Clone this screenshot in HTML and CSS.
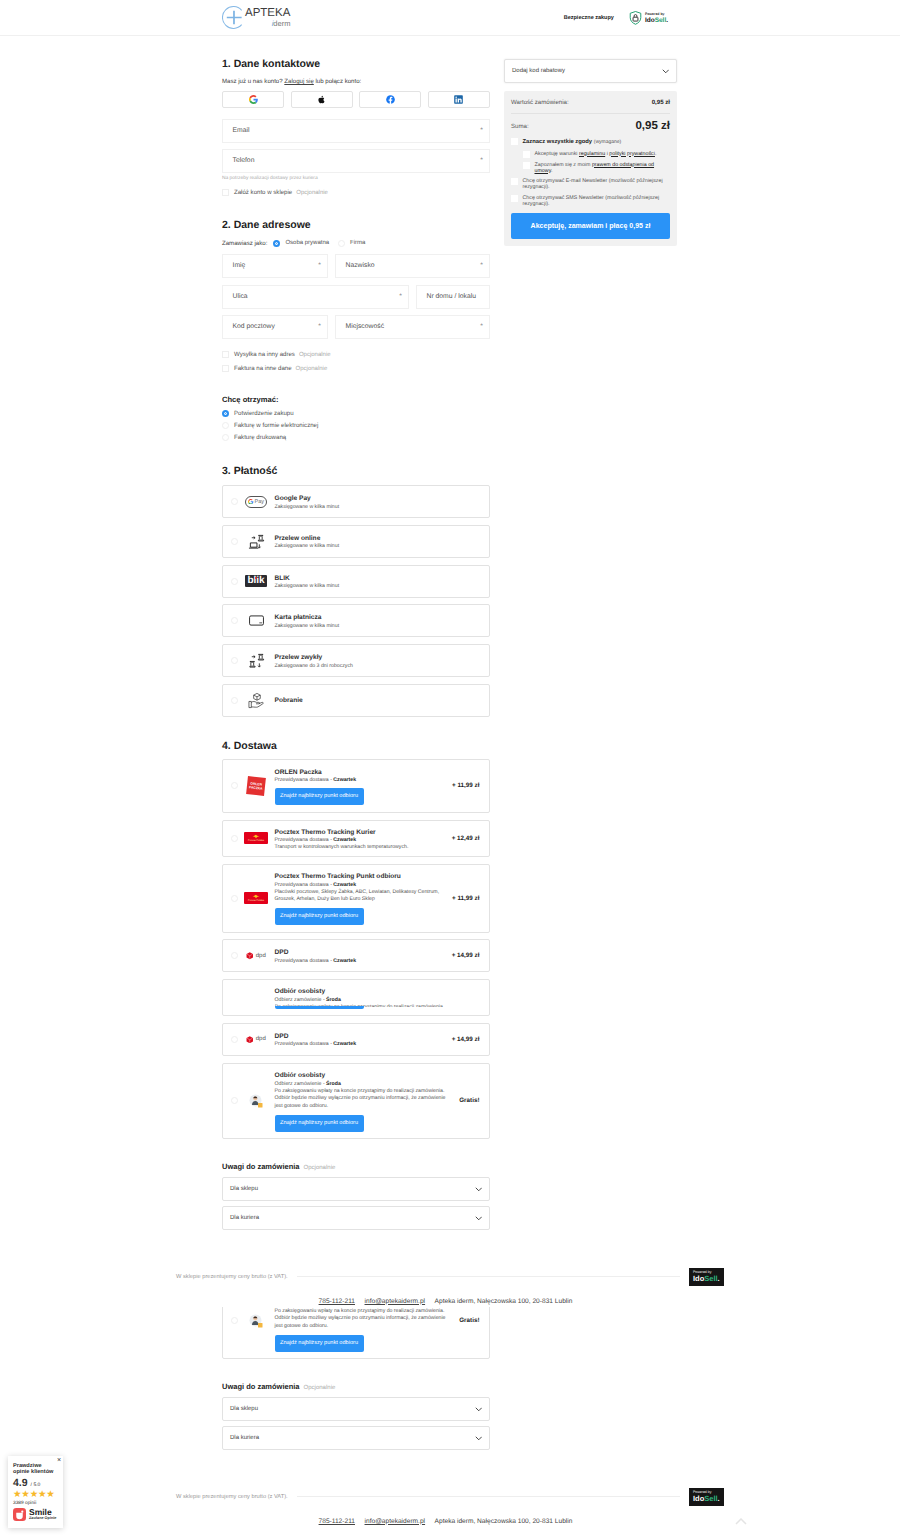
FILE: index.html
```html
<!DOCTYPE html>
<html lang="pl">
<head>
    <meta charset="UTF-8">
    <meta name="viewport" content="width=device-width, initial-scale=1.0">
    <title>Apteka iderm - zamówienie</title>
    <link rel="stylesheet" href="styles.css">
</head>
<body>
    <header class="top">
        <div class="top-in">
            <div class="logo">
                <svg class="logo-mark" viewBox="0 0 24 24"><path d="M20.500 4.500A11.400 11.400 0 1 0 20.500 19.500" fill="none" stroke="#86b9e6" stroke-width="1.100"/><path d="M12.500 5v14M5 12h15.500" stroke="#7db3e3" stroke-width="1.800" fill="none"/></svg>
                <div class="logo-text">
                    <span class="logo-name">APTEKA</span>
                    <span class="logo-sub"><i>i</i>derm</span>
                </div>
            </div>
            <div class="top-right">
                <span class="safe">Bezpieczne zakupy</span>
                <svg class="shield" viewBox="0 0 16 18"><path d="M8 1l6.500 2.200v5.300c0 4-2.800 6.700-6.500 8.200-3.700-1.500-6.500-4.200-6.500-8.200V3.200z" fill="none" stroke="#1f9d6f" stroke-width="1.200"/><rect x="5" y="8" width="6" height="4.800" rx=".8" fill="none" stroke="#222" stroke-width="1.100"/><path d="M6.300 8V6.500a1.700 1.700 0 0 1 3.400 0V8" fill="none" stroke="#222" stroke-width="1"/></svg>
                <div class="ido-top">
                    <span class="ido-small">Powered by</span>
                    <span class="ido-big">Ido<b>Sell</b>.</span>
                </div>
            </div>
        </div>
    </header>

    <div class="wrap">
        <main class="left">
            <h2 class="sec">1. Dane kontaktowe</h2>
            <p class="login-line">Masz już u nas konto? <a href="#">Zaloguj się</a> lub połącz konto:</p>
            <div class="socials">
                <button class="soc">
                    <svg viewBox="0 0 48 48"><path fill="#EA4335" d="M24 9.500c3.500 0 6.700 1.200 9.200 3.600l6.900-6.900C35.900 2.400 30.500 0 24 0 14.600 0 6.500 5.400 2.600 13.200l8 6.200C12.500 13.700 17.800 9.500 24 9.500z"/><path fill="#4285F4" d="M47 24.500c0-1.600-.1-3.100-.4-4.500H24v9h12.900c-.6 3-2.200 5.500-4.700 7.200l7.700 6C44.400 38 47 31.800 47 24.500z"/><path fill="#FBBC05" d="M10.500 28.600A14.500 14.500 0 0 1 10.500 19.400l-8-6.200a24 24 0 0 0 0 21.600z"/><path fill="#34A853" d="M24 48c6.500 0 11.900-2.100 15.900-5.800l-7.700-6c-2.200 1.500-4.900 2.300-8.200 2.300-6.200 0-11.500-4.200-13.400-9.900l-8 6.200C6.500 42.600 14.600 48 24 48z"/></svg>
                </button>
                <button class="soc">
                    <svg viewBox="0 0 24 24"><path fill="#111" d="M17.300 12.700c0-2.500 2-3.700 2.100-3.800-1.200-1.700-3-1.900-3.600-1.900-1.500-.2-3 .9-3.800.9-.8 0-2-.9-3.300-.9-1.700 0-3.300 1-4.100 2.500-1.800 3.100-.5 7.600 1.200 10.100.9 1.200 1.900 2.600 3.200 2.500 1.300 0 1.800-.8 3.300-.8s2 .8 3.300.8c1.400 0 2.300-1.200 3.100-2.400 1-1.400 1.400-2.800 1.400-2.800-.1 0-2.800-1.100-2.800-4.200zM14.800 5.300c.7-.8 1.200-2 1-3.200-1 0-2.300.7-3 1.500-.6.800-1.200 2-1 3.100 1.100.1 2.300-.6 3-1.400z"/></svg>
                </button>
                <button class="soc">
                    <svg viewBox="0 0 24 24"><circle cx="12" cy="12" r="11.500" fill="#1877f2"/><path fill="#fff" d="M16.500 15.400l.5-3.400h-3.300V9.800c0-.9.500-1.800 1.900-1.800H17V5.100s-1.300-.2-2.600-.2c-2.700 0-4.400 1.600-4.400 4.600V12H7v3.400h3v8.400a11.600 11.600 0 0 0 3.700 0v-8.400z"/></svg>
                </button>
                <button class="soc">
                    <svg viewBox="0 0 24 24"><rect x=".5" y=".5" width="23" height="23" rx="2" fill="#1d67a8"/><path fill="#fff" d="M4 9.300h3.500V20H4zM5.700 4a2 2 0 1 1 0 4 2 2 0 0 1 0-4zM9.700 9.300H13v1.500c.5-.9 1.700-1.800 3.400-1.800 3.600 0 4.200 2.300 4.200 5.400V20h-3.500v-4.900c0-1.200 0-2.700-1.700-2.700s-1.900 1.300-1.900 2.600v5H9.700z"/></svg>
                </button>
            </div>

            <div class="field email"><span>Email</span><em>*</em></div>
            <div class="field phone"><span>Telefon</span><em>*</em></div>
            <p class="note">Na potrzeby realizacji dostawy przez kuriera</p>
            <label class="opt first-opt"><i class="box"></i>Załóż konto w sklepie <small>Opcjonalnie</small></label>

            <h2 class="sec sec-gap">2. Dane adresowe</h2>
            <div class="buyer">
                <span>Zamawiasz jako:</span>
                <label class="buyer-o"><i class="dot on"></i>Osoba prywatna</label>
                <label class="buyer-o"><i class="dot"></i>Firma</label>
            </div>
            <div class="addr">
                <div class="row-a"><div class="field"><span>Imię</span><em>*</em></div><div class="field"><span>Nazwisko</span><em>*</em></div></div>
                <div class="row-b"><div class="field"><span>Ulica</span><em>*</em></div><div class="field"><span>Nr domu / lokalu</span></div></div>
                <div class="row-a"><div class="field"><span>Kod pocztowy</span><em>*</em></div><div class="field"><span>Miejscowość</span><em>*</em></div></div>
            </div>
            <label class="opt ship-opt"><i class="box"></i>Wysyłka na inny adres <small>Opcjonalnie</small></label>
            <label class="opt inv-opt"><i class="box"></i>Faktura na inne dane <small>Opcjonalnie</small></label>

            <h3 class="want">Chcę otrzymać:</h3>
            <div class="want-list">
                <label class="opt"><i class="dot on"></i>Potwierdzenie zakupu</label>
                <label class="opt"><i class="dot"></i>Fakturę w formie elektronicznej</label>
                <label class="opt"><i class="dot"></i>Fakturę drukowaną</label>
            </div>

            <h2 class="sec sec-pay">3. Płatność</h2>
            <div class="cards">
                <div class="card pay">
                    <i class="dot"></i>
                    <div class="ico"><div class="gpay"><svg viewBox="0 0 48 48"><path fill="#EA4335" d="M24 9.500c3.500 0 6.700 1.200 9.200 3.600l6.900-6.900C35.900 2.400 30.500 0 24 0 14.600 0 6.500 5.400 2.600 13.200l8 6.200C12.500 13.700 17.800 9.500 24 9.500z"/><path fill="#4285F4" d="M47 24.500c0-1.600-.1-3.100-.4-4.500H24v9h12.900c-.6 3-2.200 5.500-4.700 7.200l7.700 6C44.400 38 47 31.800 47 24.500z"/><path fill="#FBBC05" d="M10.500 28.600A14.500 14.500 0 0 1 10.500 19.400l-8-6.200a24 24 0 0 0 0 21.600z"/><path fill="#34A853" d="M24 48c6.500 0 11.900-2.100 15.900-5.800l-7.700-6c-2.200 1.500-4.900 2.300-8.200 2.300-6.200 0-11.500-4.200-13.400-9.900l-8 6.200C6.500 42.600 14.600 48 24 48z"/></svg>Pay</div></div>
                    <div class="txt"><b>Google Pay</b><span>Zaksięgowane w kilka minut</span></div>
                </div>
                <div class="card pay">
                    <i class="dot"></i>
                    <div class="ico"><svg class="line-ico" viewBox="0 0 18 18"><path d="M11 2.500h5M11.500 2.500v.8h4v-.8M12 4v3M15 4v3M11 7.500h5.500v1h-5.500z" fill="none" stroke="#222" stroke-width=".9"/><path d="M2.500 10.500h7v4.500h-7zM1 16h10" fill="none" stroke="#222" stroke-width="1"/><path d="M4 5h3.500M6 3.800L7.500 5 6 6.200M12 12v3.500M10.600 14.500L12 16l1.200-1.500" fill="none" stroke="#222" stroke-width=".9"/></svg></div>
                    <div class="txt"><b>Przelew online</b><span>Zaksięgowane w kilka minut</span></div>
                </div>
                <div class="card pay">
                    <i class="dot"></i>
                    <div class="ico"><div class="blik">blik</div></div>
                    <div class="txt"><b>BLIK</b><span>Zaksięgowane w kilka minut</span></div>
                </div>
                <div class="card pay">
                    <i class="dot"></i>
                    <div class="ico"><svg class="card-ico" viewBox="0 0 16 11"><rect x=".6" y=".6" width="14.800" height="9.800" rx="1.500" fill="none" stroke="#222" stroke-width="1"/><path d="M11 8h3" stroke="#222" stroke-width=".8"/></svg></div>
                    <div class="txt"><b>Karta płatnicza</b><span>Zaksięgowane w kilka minut</span></div>
                </div>
                <div class="card pay">
                    <i class="dot"></i>
                    <div class="ico"><svg class="line-ico" viewBox="0 0 18 18"><path d="M11 2.500h5M11.500 2.500v.8h4v-.8M12 4v3M15 4v3M11 7.500h5.500v1h-5.500z" fill="none" stroke="#222" stroke-width=".9"/><path d="M2 10h5M2.500 10v.8h4V10M3 11.500v3M6 11.500v3M2 15h5.500v1H2z" fill="none" stroke="#222" stroke-width=".9"/><path d="M4 5h3.500M6 3.800L7.500 5 6 6.200M12 12v3.500M10.600 14.500L12 16l1.200-1.500" fill="none" stroke="#222" stroke-width=".9"/></svg></div>
                    <div class="txt"><b>Przelew zwykły</b><span>Zaksięgowane do 3 dni roboczych</span></div>
                </div>
                <div class="card pay">
                    <i class="dot"></i>
                    <div class="ico"><svg class="line-ico" viewBox="0 0 18 18"><path d="M9.500 1.500l3.500 1.800v3.600l-3.500 1.800L6 6.900V3.300zM6 3.300l3.500 1.800L13 3.300M9.500 5.100v3.600" fill="none" stroke="#222" stroke-width=".7"/><path d="M1 10h2.500v6.500H1zM3.500 11c2-1.500 3.500-1 5.500 0h2.500c1 0 1 1.500 0 1.500H8.500M11.500 12.300l3.500-1.300c1.200-.3 1.500 1 .7 1.500l-5.200 3.300c-1.500.7-4 0-7 0" fill="none" stroke="#222" stroke-width=".7"/></svg></div>
                    <div class="txt"><b>Pobranie</b></div>
                </div>
            </div>

            <h2 class="sec sec-ship">4. Dostawa</h2>
            <div class="cards">
                <div class="card ship h-orlen">
                    <i class="dot"></i>
                    <div class="ico"><div class="orlen"><span>ORLEN<br>PACZKA</span></div></div>
                    <div class="txt"><b>ORLEN Paczka</b><span>Przewidywana dostawa - <strong>Czwartek</strong></span><a class="find" href="#">Znajdź najbliższy punkt odbioru</a></div>
                    <div class="price">+ 11,99 zł</div>
                </div>
                <div class="card ship h-kurier">
                    <i class="dot"></i>
                    <div class="ico"><div class="poczta"><svg viewBox="0 0 12 6"><path d="M1 2.500c2 0 3-1 5-2 1 1 2 2 5 2-2 .5-3 1-4 1.500 0 .7-.5 1.300-1 1.500-.5-.2-1-.8-1-1.500-1-.5-2-1-4-1.500z" fill="#f7c21a"/></svg><span>Poczta Polska</span></div></div>
                    <div class="txt"><b>Pocztex Thermo Tracking Kurier</b><span>Przewidywana dostawa - <strong>Czwartek</strong></span><span>Transport w kontrolowanych warunkach temperaturowych.</span></div>
                    <div class="price">+ 12,49 zł</div>
                </div>
                <div class="card ship h-punkt">
                    <i class="dot"></i>
                    <div class="ico"><div class="poczta"><svg viewBox="0 0 12 6"><path d="M1 2.500c2 0 3-1 5-2 1 1 2 2 5 2-2 .5-3 1-4 1.500 0 .7-.5 1.300-1 1.500-.5-.2-1-.8-1-1.500-1-.5-2-1-4-1.500z" fill="#f7c21a"/></svg><span>Poczta Polska</span></div></div>
                    <div class="txt"><b>Pocztex Thermo Tracking Punkt odbioru</b><span>Przewidywana dostawa - <strong>Czwartek</strong></span><span class="long">Placówki pocztowe, Sklepy Żabka, ABC, Lewiatan, Delikatesy Centrum, Groszek, Arhelan, Duży Ben lub Euro Sklep</span><a class="find" href="#">Znajdź najbliższy punkt odbioru</a></div>
                    <div class="price">+ 11,99 zł</div>
                </div>
                <div class="card ship h-dpd">
                    <i class="dot"></i>
                    <div class="ico"><div class="dpd"><svg viewBox="0 0 10 10"><path d="M5 .3l4.300 2.300v4.800L5 9.700.7 7.400V2.600z" fill="#dc0c1e"/><path d="M1.500 3L5 5l3.500-2M5 5v4" stroke="#fff" stroke-width=".5" fill="none"/></svg>dpd</div></div>
                    <div class="txt"><b>DPD</b><span>Przewidywana dostawa - <strong>Czwartek</strong></span></div>
                    <div class="price">+ 14,99 zł</div>
                </div>
                <div class="card ship h-kurier broken">
                    <div class="ico"></div>
                    <div class="txt"><b>Odbiór osobisty</b><span>Odbierz zamówienie - <strong>Środa</strong></span><span class="cut-line">Po zaksięgowaniu wpłaty na koncie przystąpimy do realizacji zamówienia.</span><span class="cut-btn"></span></div>
                </div>
                <div class="card ship h-dpd">
                    <i class="dot"></i>
                    <div class="ico"><div class="dpd"><svg viewBox="0 0 10 10"><path d="M5 .3l4.300 2.300v4.800L5 9.700.7 7.400V2.600z" fill="#dc0c1e"/><path d="M1.500 3L5 5l3.500-2M5 5v4" stroke="#fff" stroke-width=".5" fill="none"/></svg>dpd</div></div>
                    <div class="txt"><b>DPD</b><span>Przewidywana dostawa - <strong>Czwartek</strong></span></div>
                    <div class="price">+ 14,99 zł</div>
                </div>
                <div class="card ship h-self">
                    <i class="dot"></i>
                    <div class="ico"><svg class="person" viewBox="0 0 14 14"><circle cx="6.500" cy="6.500" r="6" fill="#e9edf1"/><circle cx="6.300" cy="4.500" r="2" fill="#f1c6a5"/><path d="M4.300 4.200c0-2 3.800-2.200 4 0z" fill="#3a2a22"/><path d="M3 11c0-2.800 1.500-4 3.300-4s3.200 1.200 3.200 4z" fill="#4a5560"/><rect x="9" y="9" width="4.500" height="4.500" rx=".6" fill="#f4b740"/></svg></div>
                    <div class="txt"><b>Odbiór osobisty</b><span>Odbierz zamówienie - <strong>Środa</strong></span><span class="long">Po zaksięgowaniu wpłaty na koncie przystąpimy do realizacji zamówienia. Odbiór będzie możliwy wyłącznie po otrzymaniu informacji, że zamówienie jest gotowe do odbioru.</span><a class="find" href="#">Znajdź najbliższy punkt odbioru</a></div>
                    <div class="price">Gratis!</div>
                </div>
            </div>

            <h3 class="notes-h">Uwagi do zamówienia <small>Opcjonalnie</small></h3>
            <div class="drop">Dla sklepu<svg viewBox="0 0 10 6"><path d="M1 1l4 4 4-4" fill="none" stroke="#222" stroke-width="1.100"/></svg></div>
            <div class="drop drop-2">Dla kuriera<svg viewBox="0 0 10 6"><path d="M1 1l4 4 4-4" fill="none" stroke="#222" stroke-width="1.100"/></svg></div>
        </main>

        <aside class="right">
            <div class="drop coupon">Dodaj kod rabatowy<svg viewBox="0 0 10 6"><path d="M1 1l4 4 4-4" fill="none" stroke="#222" stroke-width="1.100"/></svg></div>
            <div class="summary">
                <div class="sum-row first"><span>Wartość zamówienia:</span><b>0,95 zł</b></div>
                <div class="sum-row total"><span>Suma:</span><b>0,95 zł</b></div>
                <label class="agree all"><i class="box"></i><span><b>Zaznacz wszystkie zgody</b> <small>(wymagane)</small></span></label>
                <label class="agree sub"><i class="box"></i><span>Akceptuję warunki <a href="#">regulaminu</a> i <a href="#">polityki prywatności</a>.</span></label>
                <label class="agree sub"><i class="box"></i><span>Zapoznałem się z moim <a href="#">prawem do odstąpienia od umowy</a>.</span></label>
                <label class="agree"><i class="box"></i><span>Chcę otrzymywać E-mail Newsletter (możliwość późniejszej rezygnacji).</span></label>
                <label class="agree"><i class="box"></i><span>Chcę otrzymywać SMS Newsletter (możliwość późniejszej rezygnacji).</span></label>
                <button class="pay-btn">Akceptuję, zamawiam i płacę 0,95 zł</button>
            </div>
        </aside>
    </div>

    <footer class="foot">
        <div class="foot-top">
            <span>W sklepie prezentujemy ceny brutto (z VAT).</span>
            <i class="foot-line"></i>
            <div class="ido-box"><span>Powered by</span><strong>Ido<b>Sell</b>.</strong></div>
        </div>
        <div class="contact"><a href="#">785-112-211</a><a href="#">info@aptekaiderm.pl</a><span>Apteka iderm, Nałęczowska 100, 20-831 Lublin</span></div>
    </footer>

    <!-- dolna czesc strony, od polowy ostatniej karty -->
    <div class="repeat">
        <div class="clip">
            <div class="card ship h-self clip-card">
                <i class="dot"></i>
                <div class="ico"><svg class="person" viewBox="0 0 14 14"><circle cx="6.500" cy="6.500" r="6" fill="#e9edf1"/><circle cx="6.300" cy="4.500" r="2" fill="#f1c6a5"/><path d="M4.300 4.200c0-2 3.800-2.200 4 0z" fill="#3a2a22"/><path d="M3 11c0-2.800 1.500-4 3.300-4s3.200 1.200 3.200 4z" fill="#4a5560"/><rect x="9" y="9" width="4.500" height="4.500" rx=".6" fill="#f4b740"/></svg></div>
                <div class="txt"><b>Odbiór osobisty</b><span>Odbierz zamówienie - <strong>Środa</strong></span><span class="long">Po zaksięgowaniu wpłaty na koncie przystąpimy do realizacji zamówienia. Odbiór będzie możliwy wyłącznie po otrzymaniu informacji, że zamówienie jest gotowe do odbioru.</span><a class="find" href="#">Znajdź najbliższy punkt odbioru</a></div>
                <div class="price">Gratis!</div>
            </div>
        </div>
        <h3 class="notes-h">Uwagi do zamówienia <small>Opcjonalnie</small></h3>
        <div class="drop">Dla sklepu<svg viewBox="0 0 10 6"><path d="M1 1l4 4 4-4" fill="none" stroke="#222" stroke-width="1.100"/></svg></div>
        <div class="drop drop-2">Dla kuriera<svg viewBox="0 0 10 6"><path d="M1 1l4 4 4-4" fill="none" stroke="#222" stroke-width="1.100"/></svg></div>
    </div>

    <footer class="foot foot-last">
        <div class="foot-top">
            <span>W sklepie prezentujemy ceny brutto (z VAT).</span>
            <i class="foot-line"></i>
            <div class="ido-box"><span>Powered by</span><strong>Ido<b>Sell</b>.</strong></div>
        </div>
        <div class="contact"><a href="#">785-112-211</a><a href="#">info@aptekaiderm.pl</a><span>Apteka iderm, Nałęczowska 100, 20-831 Lublin</span></div>
    </footer>

    <div class="smile">
        <span class="smile-x">×</span>
        <b class="smile-h">Prawdziwe opinie klientów</b>
        <div class="smile-score"><b>4.9</b><span>/ 5.0</span></div>
        <div class="smile-stars">★★★★★</div>
        <div class="smile-count">3389 opinii</div>
        <div class="smile-brand">
            <svg viewBox="0 0 14 14"><rect width="14" height="14" rx="3.500" fill="#ef4f4f"/><path d="M3.500 5h7v3.500a3.500 3.500 0 0 1-7 0z" fill="#fff"/><circle cx="10" cy="4" r="1.200" fill="#fff"/></svg>
            <div><b>Smile</b><span>Zaufane Opinie</span></div>
        </div>
    </div>
    <svg class="to-top" viewBox="0 0 12 7"><path d="M1 6l5-5 5 5" fill="none" stroke="#e4e4e4" stroke-width="1.500"/></svg>
</body>
</html>
```
FILE: styles.css
```css
* {
    box-sizing: border-box;
}

body {
    position: relative;
    margin: 0;
    font-family: "Liberation Sans", Arial, sans-serif;
    font-size: 6.5px;
    color: #333;
    background-color: #fff;
    text-rendering: geometricPrecision;
}

a {
    color: inherit;
}

/* naglowek */
.top {
    height: 36px;
    border-bottom: 1px solid #f0f0f0;
}

.top-in {
    width: 455px;
    height: 35px;
    margin-left: 222px;
    display: flex;
    align-items: center;
    justify-content: space-between;
}

.logo {
    display: flex;
    align-items: center;
}

.logo-mark {
    width: 23px;
    height: 23px;
}

.logo-text {
    display: flex;
    flex-direction: column;
    align-items: flex-end;
}

.logo-name {
    font-size: 11.5px;
    line-height: 12px;
    color: #3d3d3d;
}

.logo-sub {
    margin-top: 1px;
    font-size: 7.500px;
    line-height: 8px;
    color: #777;
}

.logo-sub i {
    color: #5aa0de;
}

.top-right {
    display: flex;
    align-items: center;
    padding-right: 9px;
}

.safe {
    font-size: 5.500px;
    font-weight: bold;
    color: #222;
    margin-right: 15px;
}

.shield {
    width: 13px;
    height: 16px;
    margin-right: 3px;
}

.ido-top {
    display: flex;
    flex-direction: column;
}

.ido-small {
    font-size: 3.500px;
    line-height: 5px;
    font-weight: bold;
}

.ido-big {
    font-size: 6.500px;
    line-height: 7px;
    font-weight: bold;
    color: #111;
}

.ido-big b {
    color: #1f9d6f;
}

/* kolumny */
.wrap {
    width: 455px;
    margin-left: 222px;
    padding-top: 20px;
    display: flex;
    gap: 14px;
    align-items: flex-start;
}

.left {
    width: 268px;
    flex: none;
}

.right {
    width: 173px;
    flex: none;
    padding-top: 3px;
}

.sec {
    margin: 0;
    height: 14px;
    padding-top: 2px;
    font-size: 10.500px;
    line-height: 12px;
    color: #222;
}

.sec-gap {
    margin-top: 20px;
}

.sec-pay {
    margin-top: 21px;
}

.sec-ship {
    margin-top: 21px;
}

.login-line {
    margin: 6px 0 0;
    height: 10px;
    padding-top: 2px;
    line-height: 8px;
    font-size: 6.100px;
    color: #444;
}

.socials {
    display: flex;
    justify-content: space-between;
    margin-top: 5px;
}

.soc {
    width: 62px;
    height: 17px;
    padding: 0;
    display: flex;
    align-items: center;
    justify-content: center;
    background-color: #fff;
    border: 1px solid #e3e3e3;
    border-radius: 2px;
}

.soc svg {
    width: 9px;
    height: 9px;
}

.field {
    height: 24px;
    padding: 0 6px 1px 9.500px;
    display: flex;
    align-items: center;
    justify-content: space-between;
    border: 1px solid #f0f0f0;
    font-size: 6.800px;
    color: #555;
}

.field em {
    font-style: normal;
    color: #888;
}

.email {
    margin-top: 11px;
}

.phone {
    margin-top: 6px;
}

.note {
    margin: 1px 0 0;
    height: 8px;
    padding-top: 1px;
    font-size: 4.900px;
    line-height: 7px;
    color: #aaa;
}

.opt {
    display: flex;
    align-items: center;
    height: 10px;
    padding-top: 1px;
    font-size: 6.100px;
    color: #555;
}

.opt small {
    margin-left: 4px;
    font-size: 6px;
    color: #aaa;
}

.first-opt {
    margin-top: 5px;
}

.box {
    width: 7px;
    height: 7px;
    flex: none;
    margin-right: 5px;
    background-color: #fff;
    border: 1px solid #eee;
}

.dot {
    width: 7px;
    height: 7px;
    flex: none;
    margin-right: 5px;
    border-radius: 50%;
    background-color: #fff;
    border: 1px solid #eee;
}

.dot.on {
    border: 2px solid #2a8ff0;
    box-shadow: inset 0 0 0 1px #fff;
    background-color: #2a8ff0;
}

.buyer {
    margin-top: 7px;
    height: 10px;
    display: flex;
    align-items: center;
    font-size: 6.100px;
    color: #444;
}

.buyer-o {
    display: flex;
    align-items: center;
    margin-left: 6px;
    margin-right: 3px;
    font-size: 6px;
    color: #555;
}

.addr {
    margin-top: 6px;
    display: flex;
    flex-direction: column;
    gap: 6.500px;
}

.row-a {
    display: grid;
    grid-template-columns: 106px 155px;
    gap: 7px;
}

.row-b {
    display: grid;
    grid-template-columns: 187px 74px;
    gap: 7px;
}

.ship-opt {
    margin-top: 10px;
}

.inv-opt {
    margin-top: 4px;
}

.want {
    margin: 21px 0 0;
    height: 10px;
    padding-top: 2px;
    font-size: 7.600px;
    line-height: 8px;
    color: #222;
}

.want-list {
    margin-top: 4px;
    display: flex;
    flex-direction: column;
    gap: 2px;
}

/* karty platnosci i dostawy */
.cards {
    margin-top: 7px;
    display: flex;
    flex-direction: column;
    gap: 6.800px;
}

.sec-pay + .cards {
    margin-top: 8px;
}

.card {
    display: flex;
    align-items: center;
    padding: 0 9.500px 0 7.500px;
    background-color: #fff;
    border: 1px solid #e2e2e2;
    border-radius: 2px;
}

.card .dot {
    margin-right: 0;
}

.pay {
    height: 33px;
}

.ico {
    width: 37px;
    flex: none;
    display: flex;
    justify-content: center;
}

.txt {
    flex: 1;
    min-width: 0;
    display: flex;
    flex-direction: column;
    align-items: flex-start;
    padding-top: 1px;
    padding-right: 8px;
    font-size: 5.200px;
    line-height: 6.500px;
    color: #555;
}

.txt b {
    margin-bottom: 0.500px;
    font-size: 6.600px;
    line-height: 9px;
    color: #333;
}

.txt strong {
    color: #222;
}

.long {
    line-height: 7.500px;
    margin-top: 0.500px;
}

.price {
    flex: none;
    font-size: 6.300px;
    font-weight: bold;
    color: #222;
}

.find {
    display: block;
    margin-top: 4.500px;
    width: 89px;
    height: 17px;
    line-height: 17px;
    text-align: center;
    font-size: 5.600px;
    color: #fff;
    text-decoration: none;
    background-color: #2a93f7;
    border-radius: 2px;
}

.h-orlen {
    height: 54px;
}

.h-kurier {
    height: 37px;
}

.h-punkt {
    height: 69px;
}

.h-dpd {
    height: 33px;
}

.h-self {
    height: 76px;
}

.broken {
    padding-left: 14.500px;
}

.cut-line {
    display: block;
    height: 2.500px;
    margin-top: 1px;
    overflow: hidden;
    white-space: nowrap;
}

.cut-btn {
    display: block;
    width: 89px;
    height: 3.500px;
    margin-top: -1px;
    background-color: #2a93f7;
    border-radius: 0 0 2px 2px;
}

/* ikony */
.gpay {
    width: 22px;
    height: 12px;
    display: flex;
    align-items: center;
    justify-content: center;
    gap: 1px;
    border: 0.700px solid #555;
    border-radius: 6px;
    font-size: 5.500px;
    color: #666;
}

.gpay svg {
    width: 5.500px;
    height: 5.500px;
}

.line-ico {
    width: 17px;
    height: 17px;
}

.card-ico {
    width: 15px;
    height: 11px;
}

.blik {
    position: relative;
    width: 22px;
    height: 12px;
    text-align: center;
    font-size: 10px;
    line-height: 11.500px;
    font-weight: bold;
    color: #fff;
    background-color: #2b2b2f;
    border-radius: 1px;
}

.blik::after {
    content: "";
    position: absolute;
    left: 9.500px;
    top: 1.500px;
    width: 2px;
    height: 2px;
    border-radius: 50%;
    background-color: #e2203a;
}

.orlen {
    width: 18px;
    height: 18px;
    display: flex;
    align-items: center;
    justify-content: center;
    background-color: #e33030;
    transform: rotate(6deg);
    font-size: 3.300px;
    line-height: 4px;
    font-weight: bold;
    text-align: center;
    color: #fff;
}

.poczta {
    width: 24px;
    height: 12px;
    display: flex;
    flex-direction: column;
    align-items: center;
    justify-content: center;
    background-color: #e2001a;
    border-radius: 1px;
    font-size: 2.500px;
    line-height: 3px;
    color: #ffe6b0;
}

.poczta svg {
    width: 8px;
    height: 5px;
}

.dpd {
    display: flex;
    align-items: center;
    gap: 2px;
    font-size: 6px;
    color: #555;
}

.dpd svg {
    width: 7.500px;
    height: 7.500px;
}

.person {
    width: 14px;
    height: 14px;
}

/* dol lewej kolumny */
.notes-h {
    margin: 20px 0 0;
    height: 14px;
    padding-top: 2px;
    font-size: 7.500px;
    line-height: 12px;
    color: #222;
}

.notes-h small {
    margin-left: 2px;
    font-size: 6px;
    font-weight: normal;
    color: #aaa;
}

.drop {
    margin-top: 4px;
    height: 24px;
    padding: 0 7px;
    display: flex;
    align-items: center;
    justify-content: space-between;
    background-color: #fff;
    border: 1px solid #e2e2e2;
    border-radius: 2px;
    font-size: 6px;
    color: #444;
}

.drop svg {
    width: 7.500px;
    height: 4.500px;
}

.drop-2 {
    margin-top: 5px;
}

.coupon {
    margin-top: 0;
    box-shadow: 0 0 2px rgba(0, 0, 0, 0.1);
}

/* podsumowanie */
.summary {
    margin-top: 8px;
    height: 155px;
    padding: 0 7px;
    background-color: #f1f1f1;
    border-radius: 2px;
    color: #555;
}

.sum-row {
    display: flex;
    justify-content: space-between;
    align-items: center;
    font-size: 6.100px;
}

.sum-row b {
    color: #222;
}

.first {
    height: 23px;
    border-bottom: 1px solid #e2e2e2;
}

.total {
    height: 24px;
}

.total b {
    font-size: 11.500px;
}

.agree {
    display: flex;
    align-items: flex-start;
    margin-bottom: 5px;
    font-size: 5.300px;
    line-height: 6px;
}

.agree .box {
    border: none;
    margin-top: 0;
    margin-right: 4.500px;
}

.agree a {
    color: #222;
}

.all {
    align-items: center;
    margin-bottom: 5.500px;
    font-size: 5.800px;
}

.all b {
    color: #222;
}

.all small {
    font-size: 5px;
}

.sub {
    padding-left: 12px;
    margin-bottom: 4px;
}

.pay-btn {
    display: block;
    width: 100%;
    height: 26px;
    margin-top: 6px;
    padding: 0;
    border: none;
    border-radius: 2px;
    background-color: #2a93f7;
    color: #fff;
    font-family: inherit;
    font-size: 7.050px;
    font-weight: bold;
}

/* stopka */
.foot {
    width: 548px;
    margin: 38px 0 0 176px;
}

.foot-top {
    display: flex;
    align-items: center;
    height: 18px;
    font-size: 5.700px;
    color: #999;
}

.foot-line {
    flex: 1;
    height: 1px;
    margin: 0 9px;
    background-color: #eee;
}

.ido-box {
    width: 35px;
    height: 18px;
    display: flex;
    flex-direction: column;
    justify-content: center;
    padding-left: 4px;
    background-color: #151515;
    color: #fff;
}

.ido-box span {
    font-size: 3.500px;
    line-height: 5px;
}

.ido-box strong {
    font-size: 7.500px;
    line-height: 8px;
}

.ido-box b {
    color: #2fb37f;
}

.contact {
    margin-top: 10px;
    height: 11px;
    padding-right: 9px;
    display: flex;
    justify-content: center;
    align-items: center;
    gap: 9.500px;
    font-size: 6.600px;
    color: #444;
    background-color: #fff;
}

.foot-last {
    padding-bottom: 11px;
}

.repeat {
    width: 455px;
    margin-left: 222px;
}

.repeat .notes-h,
.repeat .drop {
    width: 268px;
}

.clip {
    width: 268px;
    height: 52px;
    overflow: hidden;
}

.clip-card {
    margin-top: -24px;
}

/* widget opinii */
.smile {
    position: absolute;
    left: 8px;
    top: 1456px;
    width: 55px;
    height: 72px;
    padding: 7px 5px 0;
    background-color: #fff;
    box-shadow: 0 1px 6px rgba(0, 0, 0, 0.18);
    color: #333;
}

.smile-x {
    position: absolute;
    right: 2px;
    top: 0;
    font-size: 7px;
    line-height: 9px;
    color: #333;
}

.smile-h {
    display: block;
    font-size: 5.600px;
    line-height: 6.200px;
}

.smile-score {
    display: flex;
    align-items: baseline;
    gap: 3px;
    margin-top: 2px;
}

.smile-score b {
    font-size: 10.500px;
    line-height: 12px;
}

.smile-score span {
    font-size: 5px;
}

.smile-stars {
    margin-top: 1px;
    font-size: 9.500px;
    line-height: 10px;
    letter-spacing: -0.200px;
    color: #f7b92b;
}

.smile-count {
    font-size: 4.800px;
    line-height: 7px;
}

.smile-brand {
    display: flex;
    align-items: center;
    gap: 3px;
    margin-top: 1px;
}

.smile-brand svg {
    width: 13px;
    height: 13px;
}

.smile-brand div {
    display: flex;
    flex-direction: column;
}

.smile-brand b {
    font-size: 8.500px;
    line-height: 8px;
    color: #222;
}

.smile-brand span {
    font-size: 3.800px;
    line-height: 5px;
    font-weight: bold;
}

.to-top {
    position: absolute;
    left: 735px;
    top: 1518px;
    width: 12px;
    height: 7px;
}
```
